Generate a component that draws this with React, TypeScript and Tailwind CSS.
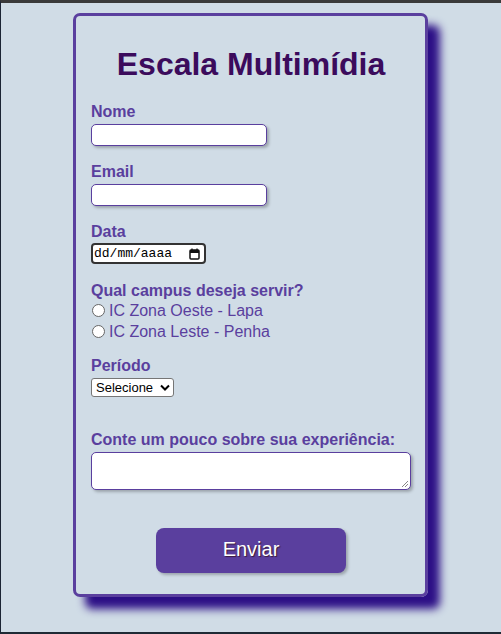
import React from "react";

function Field({ label, gap = "gap-[3px]", className = "", children }: { label: string; gap?: string; className?: string; children: React.ReactNode }) {
  return (
    <div className={`flex flex-col items-start ${gap} ${className}`}>
      <span className="text-[16px] leading-[18px] font-bold text-[#5a3f9e]">{label}</span>
      {children}
    </div>
  );
}

function Radio({ text }: { text: string }) {
  return (
    <div className="flex items-center h-[21px] text-[16px] text-[#5a3f9e]">
      <span className="w-[13px] h-[13px] rounded-full border border-[#666] bg-white ml-[1px] mr-[4px]" />
      {text}
    </div>
  );
}

export default function App() {
  const input =
    "bg-white border border-[#5a3f9e] rounded-[5px] shadow-[2px_2px_3px_rgba(0,0,0,0.25)]";
  return (
    <div
      className="w-[501px] h-[634px] bg-[#d0dce6] border-t-[3px] border-t-[#3a3a3a] border-l border-l-[#1b2434] border-b-2 border-b-[#1f2a35] overflow-hidden"
      style={{ fontFamily: '"Liberation Sans", Arial, sans-serif' }}
    >
      <div className="flex pl-[72px] pt-[10px]">
        <form className="flex flex-col w-[355px] h-[584px] border-[3px] border-[#5a3f9e] rounded-[7px] shadow-[12px_12px_8px_#2c0f86] pl-[15px] pr-[14px] pt-[30px]">
          <h1 className="text-center text-[32px] leading-[37px] font-bold text-[#3b0b5c] mb-[20px]">
            Escala Multimídia
          </h1>
          <Field label="Nome" className="mb-[17px]">
            <div className={`${input} w-[176px] h-[22px]`} />
          </Field>
          <Field label="Email" className="mb-[17px]">
            <div className={`${input} w-[176px] h-[22px]`} />
          </Field>
          <Field label="Data" gap="gap-[2px]" className="mb-[18px]">
            <div className="w-[115px] h-[21px] bg-white border-2 border-[#333] rounded-[4px] flex items-center justify-between pl-[1px] pr-[4px]">
              <span className="text-[13px] leading-[15px] text-black" style={{ fontFamily: '"Liberation Mono", monospace' }}>
                dd/mm/aaaa
              </span>
              <svg width="11" height="12" viewBox="0 0 11 12">
                <rect x="1" y="2" width="9" height="9" rx="1" fill="none" stroke="#111" strokeWidth="1.5" />
                <rect x="1" y="2" width="9" height="3" fill="#111" />
                <line x1="3" y1="0.5" x2="3" y2="3" stroke="#111" strokeWidth="1.3" />
                <line x1="8" y1="0.5" x2="8" y2="3" stroke="#111" strokeWidth="1.3" />
              </svg>
            </div>
          </Field>
          <Field label="Qual campus deseja servir?" gap="gap-0" className="mb-[15px]">
            <Radio text="IC Zona Oeste - Lapa" />
            <Radio text="IC Zona Leste - Penha" />
          </Field>
          <Field label="Período" className="mb-[34px]">
            <div className="w-[83px] h-[19px] bg-white border border-[#767676] rounded-[3px] flex items-center justify-between pl-[4px] pr-[3px]">
              <span className="text-[13px] leading-[15px] text-black">Selecione</span>
              <svg width="10" height="7" viewBox="0 0 10 7">
                <path d="M1 1.5 L5 5.5 L9 1.5" fill="none" stroke="#000" strokeWidth="2" />
              </svg>
            </div>
          </Field>
          <Field label="Conte um pouco sobre sua experiência:" className="mb-[38px]">
            <div className={`${input} flex items-end justify-end p-[1px] w-[320px] h-[38px]`}>
              <svg width="8" height="8" viewBox="0 0 8 8">
                <line x1="1" y1="7" x2="7" y2="1" stroke="#888" strokeWidth="1" />
                <line x1="4" y1="7" x2="7" y2="4" stroke="#888" strokeWidth="1" />
              </svg>
            </div>
          </Field>
          <div className="flex justify-center">
            <button
              type="button"
              className="w-[190px] h-[45px] bg-[#5a3f9e] rounded-[8px] text-white text-[20px] leading-[23px] pb-[2px] shadow-[2px_2px_3px_rgba(0,0,0,0.25)] [text-shadow:1px_1px_1px_#3a1a3a]"
            >
              Enviar
            </button>
          </div>
        </form>
      </div>
    </div>
  );
}
